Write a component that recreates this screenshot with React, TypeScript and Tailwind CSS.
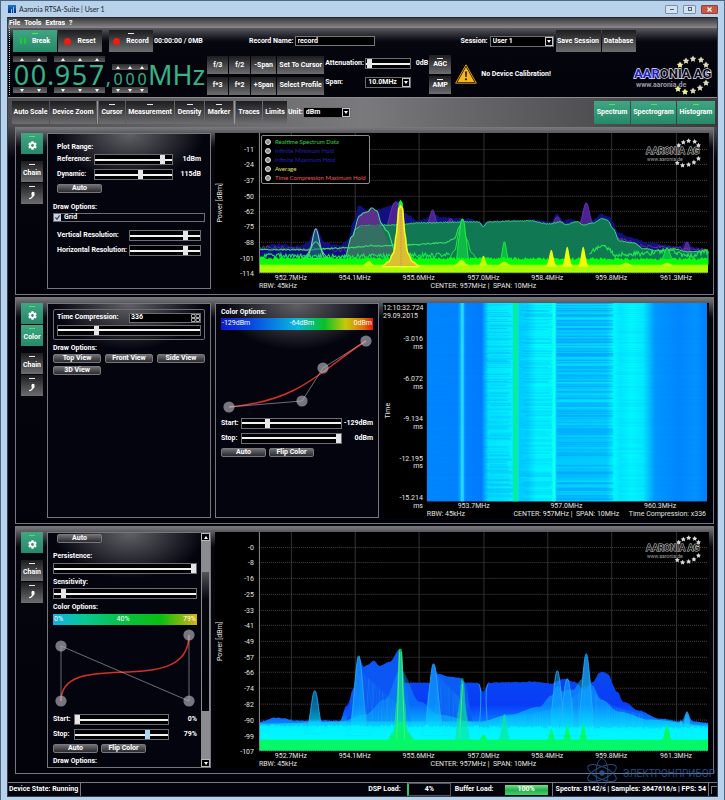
import React from 'react';
import { FaCog } from 'react-icons/fa';
import clsx from 'clsx';

const rand = (n: number) => {
  const v = Math.sin(n * 12.9898 + 4.1) * 43758.5453;
  return v - Math.floor(v);
};

type Point = [number, number];

// Samples key points at every pixel with a soft step between them
const trace = (points: Point[], noise = 0, seed = 1) => {
  const out: string[] = [];
  for (let i = 0; i < points.length - 1; i++) {
    const [x0, y0] = points[i];
    const [x1, y1] = points[i + 1];
    for (let x = x0; x < x1; x += 1) {
      const t = (x - x0) / (x1 - x0);
      const k = (1 - Math.cos(Math.PI * t)) / 2;
      const y = y0 + (y1 - y0) * k + (rand(x * seed) - 0.5) * noise;
      out.push(`${x} ${y.toFixed(1)}`);
    }
  }
  const last = points[points.length - 1];
  out.push(`${last[0]} ${last[1]}`);
  return `M${out.join('L')}`;
};

const area = (points: Point[], base: number, noise = 0, seed = 1) =>
  `${trace(points, noise, seed)}V${base}H${points[0][0]}Z`;

const peak = (cx: number, top: number, half: number, base: number) => {
  const k = half * 0.42;
  const m = half * 0.3;
  return `M${cx - half} ${base}C${cx - k} ${base - 2} ${cx - m} ${top} ${cx} ${top}C${cx + m} ${top} ${cx + k} ${base - 2} ${cx + half} ${base}Z`;
};

const STAR_SPOTS: Point[] = [
  [47, 10], [53, 6], [60, 4], [68, 5], [73, 10],
  [73, 28], [67, 33], [60, 36], [52, 37], [45, 34],
];

const star = (cx: number, cy: number, r: number) => {
  const pts: string[] = [];
  for (let i = 0; i < 10; i++) {
    const a = (Math.PI / 5) * i - Math.PI / 2;
    const d = i % 2 ? r * 0.55 : r;
    pts.push(`${(cx + Math.cos(a) * d).toFixed(2)},${(cy + Math.sin(a) * d).toFixed(2)}`);
  }
  return pts.join(' ');
};

const LogoShape = () => (
  <g fontFamily="Roboto, sans-serif">
    {STAR_SPOTS.map(([x, y], i) => (
      <polygon key={i} points={star(x, y, 3.4)} fill={i === 0 || i > 7 ? '#f3ee92' : '#d8d6b4'} />
    ))}
    <text x="1" y="23" fontSize="13" fontWeight="700" stroke="#e8e8f4" strokeWidth="1.4" paintOrder="stroke">
      <tspan fill="#1c22c8">AAR</tspan>
      <tspan fill="#0a0a18">ONIA AG</tspan>
    </text>
    <text x="3" y="32" fontSize="7" fontWeight="700" fill="#9a9aa6">
      www.aaronia.de
    </text>
  </g>
);

const PlotLogo = ({ x, y }: { x: number; y: number }) => (
  <g transform={`translate(${x} ${y})`} fontFamily="Roboto, sans-serif">
    {STAR_SPOTS.map(([sx, sy], i) => (
      <polygon key={i} points={star(sx * 0.76 - 3, sy * 0.74, 2.6)} fill="#d8d8d8" />
    ))}
    <text x="0" y="16" fontSize="9" fontWeight="700" fill="#1a1a1a" stroke="#c4c4c4" strokeWidth="1" paintOrder="stroke">
      AARONIA AG
    </text>
    <text x="1" y="23" fontSize="5" fill="#a0a0a0">www.aaronia.de</text>
  </g>
);

const WrenchIcon = () => (
  <svg viewBox="0 0 8 9" className="mt-1 h-[9px] w-2">
    <path d="M4.2 .8L6.4 1.2L6.6 3.6C6.4 5 5.8 5.6 4.8 6C4.2 7.4 3 8.2 1.2 8.2C.8 7.6 1.2 7 2 6.8C3.2 6.2 3.8 5.6 3.8 4.4C3.2 3.2 3.4 1.6 4.2 .8Z" fill="#fff" />
  </svg>
);

interface ToolButtonProps {
  children: React.ReactNode;
  active?: boolean;
  led?: boolean;
  className?: string;
  label?: string;
}

const ToolButton: React.FC<ToolButtonProps> = ({ children, active, led, className, label }) => (
  <button
    aria-label={label}
    className={clsx(
      'relative flex shrink-0 items-center justify-center whitespace-nowrap font-bold text-white',
      active
        ? 'bg-linear-to-b from-[#40a584] to-[#268a68]'
        : 'bg-linear-to-b from-[#1d1d1f] via-[#454547] to-[#6e6e70]',
      className
    )}
  >
    {led && (
      <span className={clsx('absolute top-[3px] h-px w-[6px]', active ? 'bg-[#3df04a]' : 'bg-[#e8e8e8]')} />
    )}
    {children}
  </button>
);

const PillButton = ({ children, className }: { children: React.ReactNode; className?: string }) => (
  <button
    className={clsx(
      'flex h-[9px] items-center justify-center rounded-[2px] border border-[#77777c] bg-linear-to-b from-[#707074] to-[#2c2c30] font-bold leading-none',
      className
    )}
  >
    {children}
  </button>
);

interface SliderProps {
  value: number;
  name: string;
  className?: string;
  hot?: boolean;
}

const Slider: React.FC<SliderProps> = ({ value, name, className, hot }) => (
  <input
    type="range"
    aria-label={name}
    defaultValue={value}
    className={clsx(
      'h-[11px] min-w-0 appearance-none border border-[#6c6c72] bg-black bg-[linear-gradient(#f2f2f2,#f2f2f2)] bg-[length:100%_2px] bg-center bg-no-repeat',
      '[&::-webkit-slider-thumb]:h-[9px] [&::-webkit-slider-thumb]:w-[5px] [&::-webkit-slider-thumb]:appearance-none',
      hot ? '[&::-webkit-slider-thumb]:bg-[#a4d8f6]' : '[&::-webkit-slider-thumb]:bg-[#e6e6e8]',
      className
    )}
  />
);

const Dropdown = ({ value, name, className }: { value: string; name: string; className?: string }) => (
  <span className={clsx('relative inline-flex h-[11px] border border-[#6c6c72] bg-black', className)}>
    <select aria-label={name} defaultValue={value} className="w-full appearance-none bg-transparent pl-[2px] font-bold leading-none text-white">
      <option>{value}</option>
    </select>
    <span className="pointer-events-none absolute inset-y-0 right-0 flex w-[8px] items-center justify-center border border-[#c8c8c8] bg-black">
      <svg viewBox="0 0 4 3" className="h-[3px] w-1"><path d="M0 0H4L2 3Z" fill="#fff" /></svg>
    </span>
  </span>
);

const Digits = ({ value, small }: { value: string; small?: boolean }) => {
  const cells = value.split('');
  return (
    <span className={clsx('flex', small ? 'mt-2' : '')}>
      {cells.map((digit, i) => (
        <span key={i} className={clsx('flex flex-col items-center', small ? 'w-[12px]' : 'w-[17px]')}>
          <button aria-label="Increase digit" className="flex h-[6px] w-full items-center justify-center bg-linear-to-b from-[#2c2c2e] to-[#5e5e60]">
            <svg viewBox="0 0 4 3" className="h-[3px] w-1"><path d="M0 3H4L2 0Z" fill="#fff" /></svg>
          </button>
          <span className={clsx('font-sans text-[#35b288]', small ? 'h-[17px] text-[16px] leading-[19px]' : 'h-[25px] text-[27px] leading-[25px]')}>
            {digit}
          </span>
          <button aria-label="Decrease digit" className="flex h-[6px] w-full items-center justify-center bg-linear-to-b from-[#3c3c3e] to-[#6a6a6c]">
            <svg viewBox="0 0 4 3" className="h-[3px] w-1"><path d="M0 0H4L2 3Z" fill="#fff" /></svg>
          </button>
        </span>
      ))}
    </span>
  );
};

const TopBar = () => (
  <header className="flex bg-linear-to-b from-[#5a5a5e] via-[#06060f] via-20% to-[#02020a] pb-[2px]">
    <div className="ml-px w-[3px] border-l border-dotted border-[#c8c8c8]" />
    <div className="min-w-0 flex-1 pl-px pt-[2px]">
      <div className="flex items-center">
        <ToolButton active led className="h-[22px] w-11 gap-[6px]">
          <span className="flex gap-[2px]">
            <i className="h-[6px] w-[2px] bg-[#22c83c]" />
            <i className="h-[6px] w-[2px] bg-[#22c83c]" />
          </span>
          Break
        </ToolButton>
        <ToolButton className="ml-px h-[22px] w-11 gap-[6px]">
          <i className="size-[7px] rounded-full bg-[#f01c0e]" />
          Reset
        </ToolButton>
        <ToolButton led className="ml-[7px] h-[22px] w-11 gap-[6px]">
          <i className="size-[7px] rounded-full bg-[#f01c0e]" />
          Record
        </ToolButton>
        <span className="ml-px w-[95px] font-bold">00:00:00 / 0MB</span>
        <label className="flex items-center gap-px font-bold">
          Record Name:
          <input defaultValue="record" className="h-[10px] w-20 border border-[#77777c] bg-black px-[2px] font-bold text-white" />
        </label>
        <label className="ml-[86px] flex items-center gap-[2px] font-bold">
          Session:
          <Dropdown value="User 1" name="Session" className="w-16" />
        </label>
        <ToolButton className="ml-[2px] h-[22px] w-[45px]">Save Session</ToolButton>
        <ToolButton className="ml-px h-[22px] w-[34px]">Database</ToolButton>
      </div>

      <div className="mt-[3px] flex">
        <div className="mt-px flex">
          <Digits value="00" />
          <span className="w-[7px] pt-[6px] text-center font-sans text-[27px] leading-[25px] text-[#35b288]">.</span>
          <Digits value="957" />
          <span className="w-[7px] pt-[10px] text-center font-sans text-[20px] leading-[21px] text-[#35b288]">,</span>
          <Digits value="000" small />
          <span className="pt-[6px] font-sans text-[27px] leading-[25px] text-[#35b288]">MHz</span>
        </div>
        <div className="ml-[2px] grid grid-cols-[21px_21px_25px_47px] gap-x-px gap-y-[2px] pt-px">
          {['f/3', 'f/2', '-Span', 'Set To Cursor', 'f*3', 'f*2', '+Span', 'Select Profile'].map(name => (
            <ToolButton key={name} className="h-[18px]">{name}</ToolButton>
          ))}
        </div>
        <div className="ml-px grid w-[103px] grid-cols-[40px_1fr] content-start items-center gap-y-2 pt-[3px] font-bold">
          <span>Attenuation:</span>
          <span className="flex items-center justify-between">
            <Slider value={3} name="Attenuation" className="w-[46px]" />
            0dB
          </span>
          <span>Span:</span>
          <Dropdown value="10.0MHz" name="Span" className="w-[46px]" />
        </div>
        <div className="ml-px flex flex-col gap-[2px]">
          <ToolButton led className="h-[19px] w-[22px]">AGC</ToolButton>
          <ToolButton led className="h-[18px] w-[22px]">AMP</ToolButton>
        </div>
        <div className="ml-1 flex items-center gap-1 pb-[2px] font-bold">
          <svg viewBox="0 0 22 20" className="h-5 w-[22px]">
            <path d="M11 .8L21.4 19.2H.6Z" fill="#1a1200" stroke="#d69a12" strokeWidth="1" strokeLinejoin="round" />
            <path d="M11 3L19.4 18H2.6Z" fill="#f6b81c" />
            <path d="M10 7.4H12L11.6 13H10.4Z" fill="#2a1c00" />
            <circle cx="11" cy="15.3" r="1.1" fill="#2a1c00" />
          </svg>
          No Device Calibration!
        </div>
        <svg viewBox="0 0 80 40" className="ml-auto mr-1 h-10 w-20" role="img" aria-label="Aaronia AG">
          <LogoShape />
        </svg>
      </div>
    </div>
  </header>
);

const TabBar = () => (
  <nav className="flex h-[30px] items-center border-t border-[#8c8c8e] bg-linear-to-r from-[#4e4e50] via-[#7a7a7c] via-50% to-[#3a3a3c] pl-1 pr-[2px]">
    <ToolButton className="h-[23px] w-[37px]">Auto Scale</ToolButton>
    <ToolButton className="ml-px h-[23px] w-[46px]">Device Zoom</ToolButton>
    <span className="mx-px h-[23px] w-px bg-[#9a9a9c]" />
    <ToolButton led className="h-[23px] w-[26px]">Cursor</ToolButton>
    <ToolButton led className="ml-px h-[23px] w-12">Measurement</ToolButton>
    <ToolButton led className="ml-px h-[23px] w-[29px]">Density</ToolButton>
    <ToolButton led className="ml-px h-[23px] w-7">Marker</ToolButton>
    <span className="mx-px h-[23px] w-px bg-[#9a9a9c]" />
    <ToolButton className="h-[23px] w-[26px]">Traces</ToolButton>
    <ToolButton className="ml-px h-[23px] w-6">Limits</ToolButton>
    <label className="ml-px flex items-center font-bold">
      Unit:
      <Dropdown value="dBm" name="Unit" className="w-12" />
    </label>
    <div className="ml-auto flex gap-px">
      <ToolButton active led className="h-[23px] w-[36px]">Spectrum</ToolButton>
      <ToolButton active led className="h-[23px] w-[45px]">Spectrogram</ToolButton>
      <ToolButton active led className="h-[23px] w-[38px]">Histogram</ToolButton>
    </div>
  </nav>
);

const SideButtons = ({ color }: { color?: boolean }) => (
  <div className="flex w-[22px] shrink-0 flex-col gap-px">
    <ToolButton active led label="Settings" className="h-[21px]"><FaCog className="mt-1 size-[9px]" /></ToolButton>
    {color && <ToolButton active led className="h-[21px] pt-1">Color</ToolButton>}
    <ToolButton led className="mt-[6px] h-[21px] pt-1">Chain</ToolButton>
    <ToolButton led label="Tools" className="h-[21px]"><WrenchIcon /></ToolButton>
  </div>
);

const Panel = ({ children }: { children: React.ReactNode }) => (
  <section className="flex gap-1 border border-[#77777c] bg-linear-to-b from-[#77777b] via-[#06060e] via-[20px] to-[#02020a] py-[5px] pl-[5px] pr-1">
    {children}
  </section>
);

const BOX = 'w-[164px] shrink-0 border border-[#77777c] bg-[#04040e] bg-[radial-gradient(ellipse_at_top,#606066,transparent_65%)] bg-[length:100%_50px] bg-no-repeat font-bold';

const Row = ({ label, value, children, className }: { label: string; value?: string; children: React.ReactNode; className: string }) => (
  <label className={clsx('grid h-[15px] items-center', className)}>
    <span className="whitespace-nowrap">{label}</span>
    {children}
    {value && <span className="text-right">{value}</span>}
  </label>
);

const CurveDots = ({ points }: { points: Point[] }) => (
  <>
    <polyline points={points.map(p => p.join()).join(' ')} fill="none" stroke="#b4b4bc" strokeWidth="0.6" />
    {points.map(([x, y]) => (
      <circle key={`${x}-${y}`} cx={x} cy={y} r="5.6" fill="#b4b4c0" fillOpacity="0.65" />
    ))}
  </>
);

const FREQ_TICKS: [number, string][] = [
  [291, '952.7MHz'], [355, '954.1MHz'], [419, '955.6MHz'], [484, '957.0MHz'],
  [548, '958.4MHz'], [612, '959.8MHz'], [677, '961.3MHz'],
];

const Axes = ({ top, bottom, ticks }: { top: number; bottom: number; ticks: [number, string][] }) => (
  <g fontFamily="Roboto, sans-serif" fontSize="7" fill="#e4e4e4">
    {FREQ_TICKS.map(([x, name]) => (
      <g key={name}>
        <path d={`M${x + 0.5} ${top}V${bottom}`} stroke="#323232" strokeWidth="1" />
        <text x={x} y={bottom + 7} textAnchor="middle">{name}</text>
      </g>
    ))}
    {ticks.map(([y, name]) => (
      <g key={name}>
        <path d={`M259 ${y + 0.5}H709`} stroke="#444" strokeWidth="1" strokeDasharray="1 1" />
        <text x="254" y={y + 3} textAnchor="end">{name}</text>
      </g>
    ))}
    <text x="259" y={bottom + 15}>RBW: 45kHz</text>
    <text x="484" y={bottom + 15} textAnchor="middle">CENTER: 957MHz |&#160; SPAN: 10MHz</text>
    <text transform={`translate(222 ${(top + bottom) / 2}) rotate(-90)`} textAnchor="middle">Power [dBm]</text>
    <path d={`M259.5 ${top}V${bottom}`} stroke="#8c8c8c" />
  </g>
);

const MAX_HOLD: Point[] = [
  [260, 246], [275, 243], [300, 245], [308, 241], [316, 227], [325, 242], [340, 244], [348, 240],
  [354, 220], [359, 204], [366, 209], [380, 208], [390, 205], [398, 200], [405, 212], [418, 220], [426, 218], [433, 212],
  [440, 216], [470, 218], [479, 220], [484, 223], [488, 220], [535, 219], [552, 221], [558, 213], [564, 220],
  [571, 218], [580, 221], [587, 202], [593, 219], [602, 213], [610, 216], [620, 232], [632, 237], [650, 242], [680, 246], [688, 241], [694, 247], [709, 248],
];

const PLATEAU: Point[] = [
  [345, 256], [351, 244], [356, 228], [362, 225], [400, 224], [420, 222], [479, 221], [484, 226], [488, 221],
  [530, 220], [550, 223], [562, 221], [566, 224], [578, 221], [584, 224], [594, 222], [602, 218], [608, 219],
  [614, 228], [620, 240], [634, 242], [645, 248], [660, 250], [674, 248], [690, 251], [709, 250],
];

const SpectrumPlot = () => (
  <svg viewBox="215 132 495 156" className="block h-auto w-full bg-black" role="img" aria-label="Spectrum">
    <Axes
      top={132}
      bottom={272}
      ticks={[[148, '-11'], [163, '-24'], [179, '-37'], [195, '-50'], [210, '-62'], [225, '-75'], [241, '-88'], [257, '-101'], [272, '-114']]}
    />
    <path d={area(MAX_HOLD, 272, 2, 3)} fill="#12128c" fillOpacity="0.9" />
    <g fill="#4b2293" stroke="#7b3fb0" strokeWidth="0.7">
      <path d={peak(396, 201, 18, 240)} />
      <path d={peak(433, 209, 7, 225)} />
      <path d={peak(451, 218, 8, 226)} />
      <path d={peak(558, 216, 8, 226)} />
      <path d={peak(587, 202, 9, 226)} />
      <path d={peak(688, 241, 6, 255)} />
      <path d={trace([[260, 247], [345, 249], [350, 250]], 4, 7)} fill="none" stroke="#8a3b98" />
      <path d={trace([[618, 238], [650, 246], [709, 249]], 3, 7)} fill="none" stroke="#8a3b98" />
    </g>
    <path d={area([[345, 257], [352, 236], [362, 213], [367, 211], [372, 208], [376, 210], [382, 224], [387, 230], [396, 258]], 264)} fill="#5c2f8c" />
    <path d={area(PLATEAU, 264, 1, 5)} fill="#107852" stroke="#3be078" strokeWidth="1" />
    <path d={area([[345, 257], [352, 236], [362, 225], [380, 224], [390, 242], [396, 258]], 264)} fill="#356e62" />
    <g fill="none" stroke="#53d78c" strokeWidth="1.1">
      <path d={trace([[345, 257], [352, 236], [360, 215], [364, 212], [368, 211], [372, 207], [377, 210], [382, 223], [387, 230], [396, 250]])} />
      <path d={trace([[260, 249], [300, 249], [350, 247], [372, 245], [410, 244], [445, 242], [455, 238], [460, 226], [463, 218]], 1.2, 9)} stroke="#30e062" />
      <path d={peak(316, 228, 10, 258)} fill="#207a70" fillOpacity="0.6" stroke="#8fd0b8" />
      <path d={peak(316, 241, 14, 258)} />
      <path d={trace([[590, 254], [597, 247], [606, 246], [616, 254], [640, 253], [668, 250], [690, 255], [709, 251]], 5, 4)} stroke="#20e84c" />
      <path d={trace([[260, 255], [340, 256], [400, 255], [450, 254]], 5, 6)} stroke="#10e850" />
    </g>
    <g fill="#10b848" stroke="#19f23c" strokeWidth="1">
      <path d={trace([[449, 258], [455, 250], [460, 230], [463, 218], [467, 238], [472, 252], [478, 258]])} fill="none" />
      <path d={area([[457, 260], [459, 240], [462, 219], [464, 219], [467, 240], [469, 260]], 260)} />
      <path d={peak(505, 241, 5, 260)} />
      <path d={peak(668, 247, 7, 260)} />
    </g>
    <path d={area([[393, 258], [396, 240], [399, 202], [401, 199], [403, 202], [406, 240], [409, 258]], 262)} fill="#19f23c" />
    <path d={area([[260, 257], [709, 258]], 265, 3, 11)} fill="#04ff08" />
    <rect x="260" y="264" width="449" height="8" fill="#a8ff04" />
    <g fill="#c6ff08">
      <path d={peak(369, 260, 6, 265)} />
      <path d={peak(462, 259, 8, 265)} />
      <path d={peak(484, 255, 5, 265)} />
      <path d={peak(505, 261, 7, 265)} />
    </g>
    <g fill="#f0fb0c">
      <path d={peak(552, 249, 6, 266)} />
      <path d={peak(568, 246, 6, 266)} />
      <path d={peak(584, 246, 6, 266)} />
    </g>
    <g fill="#c6ff08">
      <path d={peak(627, 262, 7, 265)} />
      <path d={peak(668, 262, 7, 265)} />
    </g>
    <path
      d={area([[383, 265], [389, 261], [394, 252], [397, 232], [399, 208], [401, 205], [403, 208], [405, 232], [408, 252], [413, 261], [419, 265]], 266)}
      fill="#d8c030"
      stroke="#f3fb20"
      strokeWidth="1.6"
    />
    <path d="M401.5 210V265" stroke="#dca04a" strokeWidth="2" strokeDasharray="2 1" />
    <PlotLogo x={647} y={137} />
  </svg>
);

const LEGEND = [
  { name: 'Realtime Spectrum Data', tone: 'text-[#2fdc3c]' },
  { name: 'Infinite Minimum Hold', tone: 'text-[#1c22c4]' },
  { name: 'Infinite Maximum Hold', tone: 'text-[#1c22c4]' },
  { name: 'Average', tone: 'text-[#e6e070]' },
  { name: 'Time Compression Maximum Hold', tone: 'text-[#f0584c]' },
];

const SpectrumPanel = () => (
  <Panel>
    <SideButtons />
    <div className={clsx(BOX, 'px-[5px] pt-2')}>
      <div className="px-1">
        <div className="h-[10px] leading-[10px]">Plot Range:</div>
        <Row label="Reference:" value="1dBm" className="grid-cols-[37px_79px_1fr]"><Slider value={90} name="Reference" /></Row>
        <Row label="Dynamic:" value="115dB" className="grid-cols-[37px_79px_1fr]"><Slider value={60} name="Dynamic" /></Row>
        <PillButton className="mt-[2px] w-[45px]">Auto</PillButton>
      </div>
      <div className="mt-2 h-3 leading-3">Draw Options:</div>
      <label className="flex h-[9px] items-center gap-[3px] border border-[#6c6c72]">
        <span className="relative flex size-[7px]">
          <input type="checkbox" defaultChecked className="size-[7px] appearance-none bg-[#c9d4e0]" />
          <svg viewBox="0 0 7 7" className="pointer-events-none absolute inset-0"><path d="M1.4 3.4L3 5.4L5.6 1.4" fill="none" stroke="#26406c" strokeWidth="1.1" /></svg>
        </span>
        Grid
      </label>
      <div className="mt-[6px] px-1">
        <Row label="Vertical Resolution:" className="grid-cols-[72px_72px]"><Slider value={81} name="Vertical Resolution" /></Row>
        <Row label="Horizontal Resolution:" className="grid-cols-[72px_72px]"><Slider value={81} name="Horizontal Resolution" /></Row>
      </div>
    </div>
    <div className="relative min-w-0 flex-1">
      <SpectrumPlot />
      <fieldset className="absolute left-[46px] top-[2px] w-[105px] rounded-[2px] border border-[#8c8c8c] bg-black px-[3px] py-px font-['Lato',sans-serif] text-[6px]">
        {LEGEND.map(item => (
          <label key={item.name} className={clsx('flex h-[9px] items-center gap-[4px] whitespace-nowrap leading-none', item.tone)}>
            <input type="radio" name={item.name} className="size-[6px] shrink-0 appearance-none rounded-full border border-[#e8e8e8] bg-[#8c8c8c]" />
            {item.name}
          </label>
        ))}
      </fieldset>
    </div>
  </Panel>
);

// Horizontal streaks of the waterfall, one entry per band of the spectrum
const BANDS = [
  { x: 483, w: 32, tone: '#0090ff', amount: 0.42 },
  { x: 519, w: 37, tone: '#0098ff', amount: 0.36 },
  { x: 557, w: 57, tone: '#0088ff', amount: 0.62 },
  { x: 616, w: 34, tone: '#00b0ff', amount: 0.2 },
];

const WaterfallPlot = () => (
  <svg viewBox="383 302 327 216" className="block h-auto w-full bg-black" role="img" aria-label="Spectrogram">
    <defs>
      <linearGradient id="waterfall" gradientUnits="userSpaceOnUse" x1="427" x2="708" y1="0" y2="0">
        <stop offset="0" stopColor="#0088ff" />
        <stop offset="0.11" stopColor="#0084ff" />
        <stop offset="0.125" stopColor="#10c8ff" />
        <stop offset="0.14" stopColor="#0084ff" />
        <stop offset="0.195" stopColor="#007cff" />
        <stop offset="0.22" stopColor="#00e8ff" />
        <stop offset="0.31" stopColor="#08f4ff" />
        <stop offset="0.33" stopColor="#00d0ff" />
        <stop offset="0.36" stopColor="#00d8ff" />
        <stop offset="0.39" stopColor="#00fcff" />
        <stop offset="0.45" stopColor="#00fcff" />
        <stop offset="0.465" stopColor="#00ccff" />
        <stop offset="0.64" stopColor="#00d0ff" />
        <stop offset="0.665" stopColor="#00fcff" />
        <stop offset="0.69" stopColor="#00ecff" />
        <stop offset="0.73" stopColor="#00fcff" />
        <stop offset="0.77" stopColor="#00f0ff" />
        <stop offset="0.815" stopColor="#0098ff" />
        <stop offset="0.9" stopColor="#0088ff" />
        <stop offset="0.96" stopColor="#0494ff" />
        <stop offset="1" stopColor="#0080ff" />
      </linearGradient>
      <linearGradient id="waterfallLine">
        <stop offset="0" stopColor="#00e8d0" />
        <stop offset="0.5" stopColor="#08f08c" />
        <stop offset="1" stopColor="#00e8d8" />
      </linearGradient>
    </defs>
    <rect x="427" y="302" width="281" height="199" fill="url(#waterfall)" />
    {Array.from({ length: 199 }, (_, row) => (
      <g key={row}>
        {BANDS.map((band, i) => {
          const shift = i === 2 ? 0 : rand(row * 3 + i) * 8;
          return (
            <rect
              key={band.x}
              x={band.x + shift}
              y={302 + row}
              width={band.w - shift - (i === 2 ? 0 : rand(row + i * 31) * 8)}
              height="1"
              fill={rand(row * 7 + i * 13) > 0.4 ? band.tone : '#10f0ff'}
              opacity={rand(row * 5 + i * 17) * band.amount}
            />
          );
        })}
        <rect x="427" y={302 + row} width="281" height="1" fill="#0060e8" opacity={rand(row * 11) * 0.06} />
      </g>
    ))}
    <rect x="461" y="302" width="3" height="199" fill="#28dcff" opacity="0.8" />
    <rect x="513" y="302" width="6" height="199" fill="url(#waterfallLine)" />
    <rect x="553" y="302" width="3" height="199" fill="#10fff4" />
    <g fontFamily="Roboto, sans-serif" fontSize="7" fill="#e4e4e4">
      <text x="383" y="309">12:10:32.724</text>
      <text x="383" y="317">29.09.2015</text>
      {[['-3.016', 340], ['-6.072', 380], ['-9.134', 420], ['-12.195', 460], ['-15.214', 500]].map(([name, y]) => (
        <g key={name} textAnchor="end">
          <text x="423" y={y}>{name}</text>
          <text x="423" y={Number(y) + 8}>ms</text>
        </g>
      ))}
      <text transform="translate(390 410) rotate(-90)" textAnchor="middle">Time</text>
      <text x="474" y="508" textAnchor="middle">953.7MHz</text>
      <text x="567" y="508" textAnchor="middle">957.0MHz</text>
      <text x="661" y="508" textAnchor="middle">960.3MHz</text>
      <text x="427" y="516">RBW: 45kHz</text>
      <text x="567" y="516" textAnchor="middle">CENTER: 957MHz |&#160; SPAN: 10MHz</text>
      <text x="707" y="516" textAnchor="end">Time Compression: x336</text>
    </g>
  </svg>
);

const SpectrogramPanel = () => (
  <Panel>
    <SideButtons color />
    <div className={clsx(BOX, 'p-[5px]')}>
      <div className="flex h-[31px] flex-col justify-center gap-[2px] rounded-[2px] border border-[#6c6c72] px-[3px]">
        <label className="flex items-center justify-between">
          Time Compression:
          <span className="flex h-[10px] w-[72px] border border-[#6c6c72] bg-black">
            <input defaultValue="336" className="w-full min-w-0 bg-transparent px-px font-bold text-white" />
            <button aria-label="Step" className="w-[9px] shrink-0">
              <svg viewBox="0 0 9 8" className="h-2 w-[9px]"><path d="M.5 .5H4V3.5H.5ZM5 .5H8.5V3.5H5ZM.5 4.5H4V7.5H.5ZM5 4.5H8.5V7.5H5Z" fill="none" stroke="#b8b8b8" strokeWidth="0.9" /></svg>
            </button>
          </span>
        </label>
        <Slider value={26} name="Compression amount" className="w-full" />
      </div>
      <div className="mt-[2px] h-3 leading-3">Draw Options:</div>
      <div className="grid grid-cols-3 gap-x-1 gap-y-[3px]">
        {['Top View', 'Front View', 'Side View', '3D View'].map(name => (
          <PillButton key={name}>{name}</PillButton>
        ))}
      </div>
    </div>
    <div className={clsx(BOX, 'px-[5px] pt-[3px]')}>
      <div className="h-[11px] leading-[11px]">Color Options:</div>
      <div className="flex h-3 items-center justify-between bg-[linear-gradient(90deg,#1018d0,#0848e0_20%,#08b8e0_50%,#08c028_68%,#c8c808_82%,#e07808_93%,#e01808)] px-px font-normal">
        <span>-129dBm</span>
        <span>-64dBm</span>
        <span>0dBm</span>
      </div>
      <svg viewBox="221 329 152 86" className="block h-auto w-full">
        <path d="M229 406C302 400 323 367 366 340" fill="none" stroke="#d83028" strokeWidth="1.5" />
        <CurveDots points={[[229, 406], [302, 400], [323, 367], [366, 340]]} />
      </svg>
      <Row label="Start:" value="-129dBm" className="grid-cols-[20px_1fr_31px]"><Slider value={24} name="Start" /></Row>
      <Row label="Stop:" value="0dBm" className="grid-cols-[20px_1fr_31px]"><Slider value={100} name="Stop" /></Row>
      <div className="mt-[2px] flex gap-[3px]">
        <PillButton className="w-[45px]">Auto</PillButton>
        <PillButton className="w-[45px]">Flip Color</PillButton>
      </div>
    </div>
    <div className="min-w-0 flex-1">
      <WaterfallPlot />
    </div>
  </Panel>
);

const HISTO_BACK: Point[] = [
  [260, 722], [275, 718], [300, 721], [340, 721], [347, 706], [354, 692], [366, 684], [405, 683], [478, 683], [484, 692], [489, 683],
  [535, 682], [552, 684], [565, 679], [575, 682], [585, 690], [594, 682], [600, 673], [604, 672], [608, 674], [618, 692], [624, 702],
  [640, 711], [660, 719], [682, 722], [688, 714], [694, 722], [709, 723],
];

const HISTO_SKIRT: Point[] = [
  [260, 724], [350, 722], [420, 722], [480, 722], [510, 715], [540, 707], [552, 696], [558, 686], [564, 692],
  [568, 690], [574, 690], [582, 680], [587, 656], [593, 686], [602, 700], [620, 712], [650, 720], [709, 726],
];

const HistogramPlot = () => (
  <svg viewBox="215 532 495 236" className="block h-auto w-full bg-black" role="img" aria-label="Histogram">
    <defs>
      <linearGradient id="histoBack" gradientUnits="userSpaceOnUse" x1="0" x2="0" y1="650" y2="742">
        <stop offset="0" stopColor="#0a50e8" />
        <stop offset="0.6" stopColor="#083cf8" />
        <stop offset="0.8" stopColor="#0880ff" />
        <stop offset="0.92" stopColor="#00f4ff" />
      </linearGradient>
      <linearGradient id="histoFront" gradientUnits="userSpaceOnUse" x1="0" x2="0" y1="650" y2="742">
        <stop offset="0" stopColor="#2090f8" stopOpacity="0.6" />
        <stop offset="0.6" stopColor="#08a8ff" stopOpacity="0.6" />
        <stop offset="1" stopColor="#00fcff" />
      </linearGradient>
      <linearGradient id="histoGreen" gradientUnits="userSpaceOnUse" x1="0" x2="0" y1="650" y2="742">
        <stop offset="0" stopColor="#14e878" />
        <stop offset="1" stopColor="#04e8a0" />
      </linearGradient>
    </defs>
    <Axes
      top={532}
      bottom={751}
      ticks={[
        [547, '-0'], [562, '-8'], [578, '-16'], [594, '-25'], [610, '-33'], [625, '-41'], [641, '-49'], [657, '-57'],
        [672, '-66'], [688, '-74'], [704, '-82'], [720, '-90'], [736, '-99'], [751, '-107'],
      ]}
    />
    <path d={area(HISTO_BACK, 751, 1, 3)} fill="url(#histoBack)" />
    <path d={area([[346, 722], [353, 690], [359, 657], [364, 667], [368, 665], [374, 661], [380, 666], [390, 662], [400, 650], [407, 690], [412, 722]], 745)} fill="#0b56f4" />
    <path d={area([[425, 722], [429, 690], [434, 664], [438, 674], [450, 677], [460, 678], [465, 682], [474, 722]], 745)} fill="#0b5cf4" />
    <path d={area(HISTO_SKIRT, 745)} fill="url(#histoFront)" />
    <path d={area([[340, 722], [365, 715], [385, 700], [401, 670], [420, 702], [440, 715], [475, 722]], 742)} fill="url(#histoFront)" opacity="0.7" />
    {Array.from({ length: 120 }, (_, i) => {
      const x = 500 + i * 1.2;
      const top = 718 - 34 * Math.exp(-Math.abs(x - 587) / 26);
      return <path key={i} d={`M${x} ${top}V740`} stroke="#20dcff" strokeWidth="0.7" opacity={0.1 + rand(i * 9) * 0.3} />;
    })}
    {Array.from({ length: 28 }, (_, i) => (
      <path key={i} d={`M${362 + i * 1.4} ${672 + i * 1.3}L${358 + i * 1.5} 738`} stroke="#20c8ff" strokeWidth="0.7" opacity={0.1 + rand(i * 5) * 0.3} />
    ))}
    {Array.from({ length: 24 }, (_, i) => (
      <path key={i} d={`M${438 + i * 1.2} ${676 + i * 1.2}L${434 + i * 1.6} 738`} stroke="#20c8ff" strokeWidth="0.7" opacity={0.1 + rand(i * 3) * 0.3} />
    ))}
    <g fill="url(#histoFront)" stroke="#28b0f8" strokeWidth="0.8">
      <path d={peak(315, 691, 11, 734)} />
      <path d={peak(359, 656, 12, 736)} />
      <path d={peak(434, 664, 13, 736)} />
      <path d={peak(558, 671, 12, 736)} />
      <path d={peak(568, 679, 12, 736)} />
      <path d={peak(587, 654, 12, 736)} />
      <path d={peak(682, 721, 7, 738)} />
      <path d={peak(688, 712, 7, 738)} />
      <path d="M479 684C483 686 481 716 479 736M489 684C485 686 487 716 489 736" fill="none" />
    </g>
    <path d={area([[260, 726], [709, 728]], 742, 3, 8)} fill="#00f8ff" fillOpacity="0.75" />
    <g fill="url(#histoGreen)">
      <path d={area([[386, 742], [394, 732], [397, 700], [399, 649], [402, 649], [405, 700], [408, 732], [417, 742]], 743)} fillOpacity="0.7" />
      <path d={area([[455, 742], [459, 710], [462, 678], [464, 679], [467, 715], [471, 742]], 743)} fillOpacity="0.6" />
      <path d={peak(505, 714, 7, 741)} fillOpacity="0.7" />
    </g>
    <g fill="#04f868">
      <path d={peak(401, 722, 17, 742)} fillOpacity="0.8" />
      <path d={peak(484, 735, 5, 741)} />
      <path d={peak(552, 729, 5, 742)} />
      <path d={peak(568, 725, 5, 742)} />
      <path d={peak(584, 724, 5, 742)} />
      <path d={peak(668, 725, 6, 742)} />
      <rect x="260" y="740" width="449" height="11" />
    </g>
    <path d="M397 740L400 652M405 740L402 652M460 740L463 684" stroke="#40f070" strokeWidth="1" fill="none" />
    <PlotLogo x={647} y={535} />
  </svg>
);

const HistogramPanel = () => (
  <Panel>
    <SideButtons />
    <div className={clsx(BOX, 'flex')}>
      <div className="min-w-0 flex-1 pl-[5px] pr-1 pt-px">
        <PillButton className="ml-1 w-[45px]">Auto</PillButton>
        <label className="mt-[7px] block">
          <span className="block h-[13px] leading-3">Persistence:</span>
          <Slider value={100} name="Persistence" className="block w-full" />
        </label>
        <label className="mt-[2px] block">
          <span className="block h-3 leading-3">Sensitivity:</span>
          <Slider value={5} name="Sensitivity" className="block w-full" />
        </label>
        <div className="mt-[2px] h-[13px] leading-3">Color Options:</div>
        <div className="flex h-[11px] items-center justify-between bg-[linear-gradient(90deg,#10b0e8,#08c890_22%,#08c040_50%,#08c010_75%,#d8b010)] px-px font-normal">
          <span>0%</span>
          <span>40%</span>
          <span>79%</span>
        </div>
        <svg viewBox="53 625 144 87" className="block h-auto w-full">
          <path d="M61 701C61 646 189 701 189 635" fill="none" stroke="#d83028" strokeWidth="1.5" />
          <CurveDots points={[[61, 701], [61, 646], [189, 701], [189, 635]]} />
        </svg>
        <Row label="Start:" value="0%" className="grid-cols-[21px_1fr_28px]"><Slider value={0} name="Start" /></Row>
        <Row label="Stop:" value="79%" className="grid-cols-[21px_1fr_28px]"><Slider value={79} name="Stop" hot /></Row>
        <div className="mt-[2px] flex gap-[3px]">
          <PillButton className="w-[45px]">Auto</PillButton>
          <PillButton className="w-[45px]">Flip Color</PillButton>
        </div>
        <div className="mt-[2px] h-3 leading-3">Draw Options:</div>
      </div>
      <div className="flex w-[9px] shrink-0 flex-col bg-[#8c8c90]">
        <button aria-label="Scroll up" className="flex h-2 items-center justify-center border border-[#b8b8b8] bg-black">
          <svg viewBox="0 0 4 3" className="h-[3px] w-1"><path d="M0 3H4L2 0Z" fill="#fff" /></svg>
        </button>
        <div className="mt-[30px] h-[141px] border border-[#8c8c90] bg-linear-to-b from-[#55555a] via-[#06060e] via-20% to-[#02020a]" />
        <button aria-label="Scroll down" className="mt-auto flex h-2 items-center justify-center border border-[#b8b8b8] bg-black">
          <svg viewBox="0 0 4 3" className="h-[3px] w-1"><path d="M0 0H4L2 3Z" fill="#fff" /></svg>
        </button>
      </div>
    </div>
    <div className="min-w-0 flex-1">
      <HistogramPlot />
    </div>
  </Panel>
);

const StatusBar = () => (
  <footer className="mt-2 flex h-[14px] items-center border-t border-[#77777c] font-bold">
    <span className="flex h-full items-center border-r border-[#77777c] pl-px pr-[2px]">Device State: Running</span>
    <span className="ml-auto">DSP Load:</span>
    <span className="ml-[6px] flex h-full w-11 items-center justify-center border border-l-2 border-[#55555a] border-l-[#2fc46c]">4%</span>
    <span className="ml-1">Buffer Load:</span>
    <span className="ml-[11px] flex h-[10px] w-[43px] items-center justify-center bg-linear-to-b from-[#6ce088] via-[#22b04c] to-[#48cc6c]">100%</span>
    <span className="ml-1 flex h-full items-center whitespace-nowrap border-x border-[#77777c] pl-[3px] pr-[2px]">
      Spectra: 8142/s | Samples: 3647616/s | FPS: 54
    </span>
    <span className="ml-[2px] h-2 w-[6px] border-l border-t border-[#77777c]" />
  </footer>
);

const Watermark = () => (
  <div className="pointer-events-none absolute bottom-[11px] right-[9px] flex items-center gap-1 text-[10px] text-[#2c62a4] opacity-75">
    <svg viewBox="0 0 34 32" className="h-8 w-[34px]" fill="none" stroke="#2c62a4" strokeWidth="1">
      <ellipse cx="17" cy="16" rx="15.5" ry="6" transform="rotate(25 17 16)" />
      <ellipse cx="17" cy="16" rx="15.5" ry="6" transform="rotate(-25 17 16)" />
      <ellipse cx="17" cy="16" rx="6" ry="14.5" />
      <circle cx="17" cy="16" r="2.4" fill="#2c62a4" />
    </svg>
    ЭЛЕКТРОНПРИБОР
  </div>
);

const App = () => {
  return (
    <div className="relative flex min-h-screen flex-col border border-[#4c6884] bg-[#b9d2ec] px-[6px] pb-[3px] font-['Roboto','Liberation_Sans',sans-serif] text-[7px] leading-[9px] text-white">
      <div className="flex h-4 items-center gap-[3px] pl-px text-[#20242c]">
        <span className="flex size-2 items-end justify-center gap-px bg-linear-to-b from-[#1c74e0] to-[#0a2c68]">
          <i className="h-1 w-px bg-[#7cc4ff]" />
          <i className="h-[6px] w-px bg-[#7cc4ff]" />
        </span>
        <h1 className="font-['Lato',sans-serif]">Aaronia RTSA-Suite | User 1</h1>
        <div className="ml-auto flex gap-[5px]">
          <button aria-label="Minimize" className="flex h-[9px] w-[13px] items-center justify-center rounded-[1px] border border-[#7c90a8] bg-[#d4e2f0]"><i className="h-px w-1 bg-[#50607a]" /></button>
          <button aria-label="Maximize" className="flex h-[9px] w-[13px] items-center justify-center rounded-[1px] border border-[#7c90a8] bg-[#d4e2f0]"><i className="size-1 border border-[#50607a]" /></button>
          <button aria-label="Close" className="flex h-[9px] w-[17px] items-center justify-center rounded-[1px] border border-[#8c4840] bg-[#cc5844]">
            <svg viewBox="0 0 5 5" className="size-[5px]"><path d="M.5 .5L4.5 4.5M4.5 .5L.5 4.5" stroke="#fff" strokeWidth="1.2" /></svg>
          </button>
        </div>
      </div>

      <div className="flex flex-1 flex-col border border-t-0 border-[#30404e] bg-[#03030b]">
        <div className="flex h-[11px] items-center gap-1 border-t border-[#28282c] bg-linear-to-b from-[#3c3c3e] to-[#8a8a8c] pl-px font-bold">
          <button>File</button>
          <button>Tools</button>
          <button>Extras</button>
          <button>?</button>
        </div>
        <TopBar />
        <TabBar />
        <main className="flex flex-col gap-[2px] bg-linear-to-b from-[#4a4a4c] to-[#03030b] to-5% pl-[7px] pr-[3px]">
          <SpectrumPanel />
          <SpectrogramPanel />
          <HistogramPanel />
        </main>
        <StatusBar />
      </div>
      <Watermark />
    </div>
  );
};

export default App;
